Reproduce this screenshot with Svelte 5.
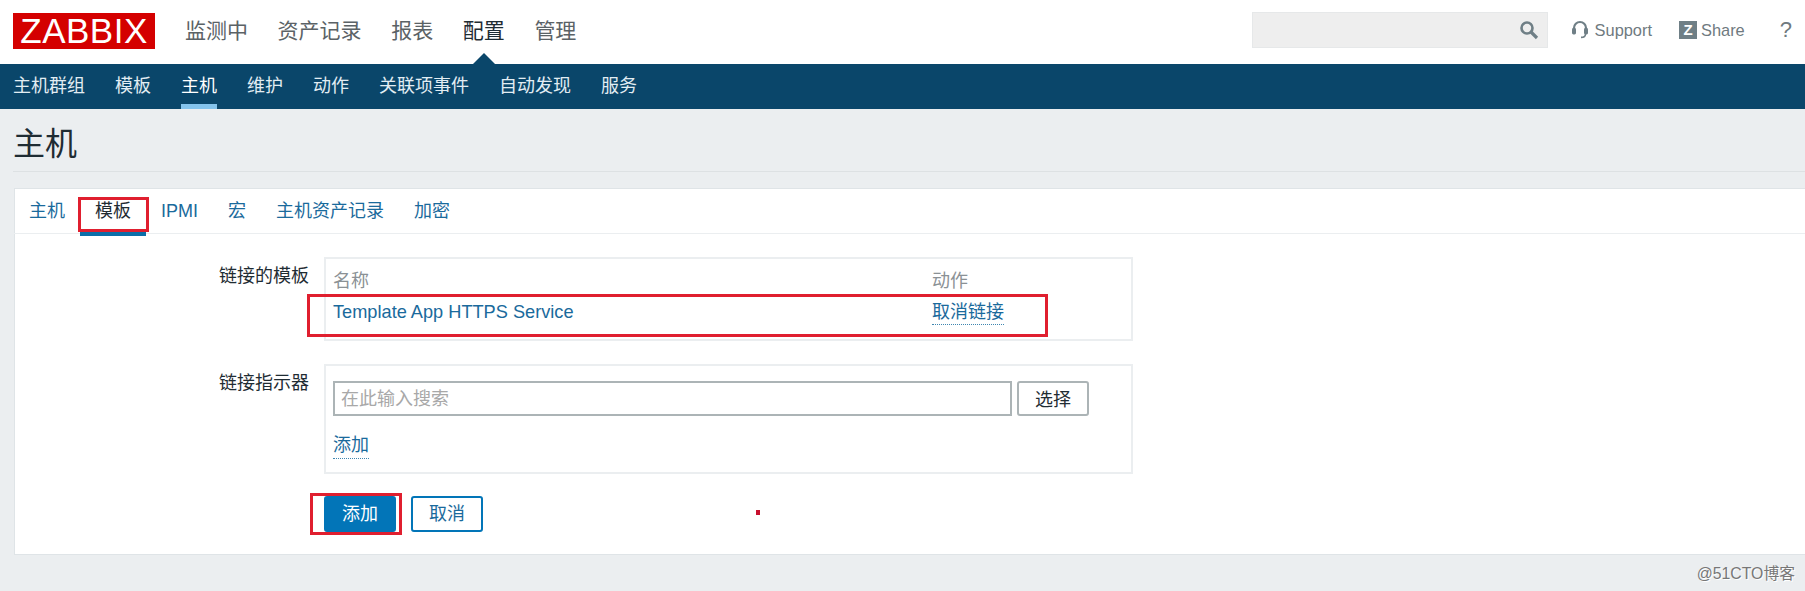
<script>
	const mainNav = ['监测中', '资产记录', '报表', '配置', '管理'];
	const subNav = ['主机群组', '模板', '主机', '维护', '动作', '关联项事件', '自动发现', '服务'];
	const tabs = ['主机', '模板', 'IPMI', '宏', '主机资产记录', '加密'];
</script>

<div class="page">
	<header class="top">
		<div class="logo">ZABBIX</div>
		<nav class="main-nav">
			{#each mainNav as item}
				<a class:selected={item === '配置'}>{item}</a>
			{/each}
		</nav>
		<div class="top-right">
			<div class="search">
				<svg width="20" height="20" viewBox="0 0 20 20" fill="none" stroke="#6f7f86">
					<circle cx="8" cy="8" r="5.5" stroke-width="2.6" />
					<path d="M12 12l6 6" stroke-width="3.2" />
				</svg>
			</div>
			<a class="support">
				<svg width="18" height="20" viewBox="0 0 18 20" fill="none" stroke="#6f7f86">
					<path d="M3 11V8a6 6 0 0 1 12 0v3" stroke-width="2.2" />
					<rect x="1" y="8" width="4" height="6.5" rx="1.4" fill="#6f7f86" stroke="none" />
					<rect x="13" y="8" width="4" height="6.5" rx="1.4" fill="#6f7f86" stroke="none" />
					<path d="M14.5 14c0 2.4-2 3.4-4.5 3.4" stroke-width="1.6" />
				</svg>
				Support
			</a>
			<a class="share"><span class="z-box">Z</span>Share</a>
			<a class="help">?</a>
		</div>
	</header>

	<nav class="sub-nav">
		{#each subNav as item}
			<a class:selected={item === '主机'}>{item}</a>
		{/each}
	</nav>

	<h1>主机</h1>

	<section class="card">
		<div class="tabs">
			{#each tabs as tab}
				<a class:selected={tab === '模板'}>{tab}</a>
			{/each}
		</div>

		<div class="form">
			<div class="row">
				<div class="label">链接的模板</div>
				<div class="box linked">
					<table>
						<thead>
							<tr><th>名称</th><th class="action">动作</th></tr>
						</thead>
						<tbody>
							<tr>
								<td><a>Template App HTTPS Service</a></td>
								<td class="action"><a class="dotted">取消链接</a></td>
							</tr>
						</tbody>
					</table>
				</div>
			</div>

			<div class="row">
				<div class="label">链接指示器</div>
				<div class="box picker">
					<div class="picker-line">
						<input type="text" placeholder="在此输入搜索" />
						<button class="select">选择</button>
					</div>
					<a class="dotted add">添加</a>
				</div>
			</div>

			<div class="buttons">
				<button class="primary">添加</button>
				<button class="cancel">取消</button>
			</div>
		</div>
	</section>

	<div class="watermark">@51CTO博客</div>

	<!-- red annotations painted on top of the screenshot -->
	<div class="mark mark-tab"></div>
	<div class="mark mark-row"></div>
	<div class="mark mark-btn"></div>
	<div class="mark-dot"></div>
</div>

<style>
	:global(body) {
		margin: 0;
		background: #ebeef0;
	}

	.page {
		position: relative;
		height: 591px;
		overflow: hidden;
		background: #ebeef0;
		font-family: 'Liberation Sans', 'Noto Sans CJK SC', sans-serif;
		font-size: 18px;
		color: #1f2c33;
	}

	.top {
		display: flex;
		align-items: center;
		height: 64px;
		background: #fff;
		padding-left: 13px;
	}

	.logo {
		width: 142px;
		height: 36px;
		background: #d40000;
		color: #fff;
		font-size: 35px;
		line-height: 36px;
		letter-spacing: 0.5px;
		text-align: center;
		margin-top: -3px;
	}

	.main-nav {
		display: flex;
		gap: 29.6px;
		margin-left: 30px;
		margin-top: -3px;
	}

	.main-nav a {
		position: relative;
		font-size: 21px;
		line-height: 30px;
		color: #5b6266;
	}

	.main-nav a.selected {
		color: #1f2c33;
	}

	.main-nav a.selected::after {
		content: '';
		position: absolute;
		left: 50%;
		bottom: -19px;
		margin-left: -12px;
		border: 12px solid transparent;
		border-top: 0;
		border-bottom-color: #0a466a;
	}

	.top-right {
		display: flex;
		align-items: center;
		margin-left: auto;
		margin-top: -4px;
		padding-right: 13px;
	}

	.search {
		display: flex;
		align-items: center;
		justify-content: flex-end;
		box-sizing: border-box;
		width: 296px;
		height: 36px;
		padding-right: 8px;
		background: #eeeeee;
		border: 1px solid #e6e8e9;
	}

	.support,
	.share {
		display: flex;
		align-items: center;
		font-size: 16.4px;
		color: #6f7a80;
	}

	.support {
		gap: 6px;
		margin-left: 23px;
	}

	.share {
		gap: 4px;
		margin-left: 27px;
	}

	.z-box {
		width: 18px;
		height: 18px;
		background: #6f7f86;
		color: #fff;
		font-size: 15px;
		font-weight: 700;
		line-height: 18px;
		text-align: center;
	}

	.help {
		margin-left: 35px;
		font-size: 22px;
		color: #6f7a80;
	}

	.sub-nav {
		display: flex;
		gap: 30px;
		height: 45px;
		padding-left: 13px;
		background: #0a466a;
	}

	.sub-nav a {
		position: relative;
		font-size: 18px;
		line-height: 45px;
		color: #e2edf3;
	}

	.sub-nav a.selected {
		color: #fff;
	}

	.sub-nav a.selected::after {
		content: '';
		position: absolute;
		left: 0;
		right: 0;
		bottom: 0;
		height: 5px;
		background: #84c3ec;
	}

	h1 {
		margin: 0 0 16px 13px;
		height: 58px;
		padding-top: 4px;
		border-bottom: 1px solid #dde1e3;
		font-size: 32px;
		font-weight: 400;
		line-height: 62px;
		color: #1f2c33;
	}

	.card {
		box-sizing: border-box;
		height: 367px;
		margin-left: 14px;
		background: #fff;
		border: 1px solid #dfe4e7;
		border-right: 0;
	}

	.tabs {
		display: flex;
		box-sizing: border-box;
		height: 45px;
		margin-left: -1px;
		border-bottom: 1px solid #ebeef0;
	}

	.tabs a {
		position: relative;
		padding: 0 15px;
		font-size: 18px;
		line-height: 44px;
		color: #1a6a9c;
	}

	.tabs a.selected {
		color: #1f2c33;
	}

	.tabs a.selected::after {
		content: '';
		position: absolute;
		left: 0;
		right: 0;
		bottom: -3px;
		height: 4px;
		background: #0b6ea8;
	}

	.form {
		display: flex;
		flex-direction: column;
		padding-top: 23px;
	}

	.row {
		display: flex;
		gap: 15px;
		margin-bottom: 23px;
	}

	.label {
		box-sizing: border-box;
		width: 294px;
		font-size: 18px;
		line-height: 26px;
		padding-top: 6px;
		text-align: right;
		color: #1f2c33;
	}

	.box {
		box-sizing: border-box;
		width: 809px;
		background: #fff;
		border: 2px solid #ebeef0;
	}

	.linked {
		height: 84px;
	}

	table {
		width: 100%;
		border-collapse: collapse;
	}

	th,
	td {
		padding: 0 0 0 7px;
		text-align: left;
		font-weight: 400;
	}

	th {
		padding-top: 10px;
		padding-bottom: 6px;
		font-size: 18px;
		line-height: 24px;
		color: #8b9195;
	}

	td {
		height: 26px;
		font-size: 18.2px;
		line-height: 26px;
		color: #1a6a9c;
	}

	th.action,
	td.action {
		width: 199px;
		padding-left: 0;
	}

	.dotted {
		border-bottom: 1px dotted #3f86b0;
		color: #1a6a9c;
		font-size: 18px;
		line-height: 24px;
		padding-bottom: 2px;
	}

	.picker {
		height: 110px;
		padding: 15px 0 0 7px;
	}

	.picker-line {
		display: flex;
		gap: 5px;
		margin-bottom: 17px;
	}

	input {
		box-sizing: border-box;
		width: 679px;
		height: 35px;
		padding: 2px 6px 0;
		background: #fff;
		border: 2px solid #acb4b6;
		font: inherit;
		font-size: 18px;
	}

	input::placeholder {
		color: #a8a8a8;
		opacity: 1;
	}

	button {
		box-sizing: border-box;
		height: 35px;
		padding: 0;
		border-radius: 3px;
		font: inherit;
		font-size: 18px;
		line-height: 31px;
	}

	.select {
		width: 72px;
		padding-top: 2px;
		background: #fff;
		border: 2px solid #acb4b6;
		color: #1f2c33;
	}

	.add {
		display: inline-block;
		line-height: 24px;
		padding: 0 0 1px;
	}

	.buttons {
		display: flex;
		gap: 15px;
		padding-left: 309px;
		margin-top: -1px;
	}

	.primary {
		width: 72px;
		height: 36px;
		background: #0275b8;
		border: 2px solid #0275b8;
		color: #fff;
	}

	.cancel {
		width: 72px;
		height: 36px;
		background: #fff;
		border: 2px solid #0275b8;
		color: #1a6a9c;
	}

	.watermark {
		position: absolute;
		right: 10px;
		top: 564px;
		font-size: 15.8px;
		line-height: 20px;
		color: #777;
		text-shadow: 1px 1px 0 #fff;
	}

	.mark {
		position: absolute;
		box-sizing: border-box;
		border: 3px solid #e01f2f;
	}

	.mark-tab {
		left: 78px;
		top: 197px;
		width: 71px;
		height: 35px;
	}

	.mark-row {
		left: 307px;
		top: 294px;
		width: 741px;
		height: 43px;
	}

	.mark-btn {
		left: 310px;
		top: 493px;
		width: 92px;
		height: 42px;
	}

	.mark-dot {
		position: absolute;
		left: 756px;
		top: 510px;
		width: 4px;
		height: 5px;
		background: #c8102e;
	}
</style>
